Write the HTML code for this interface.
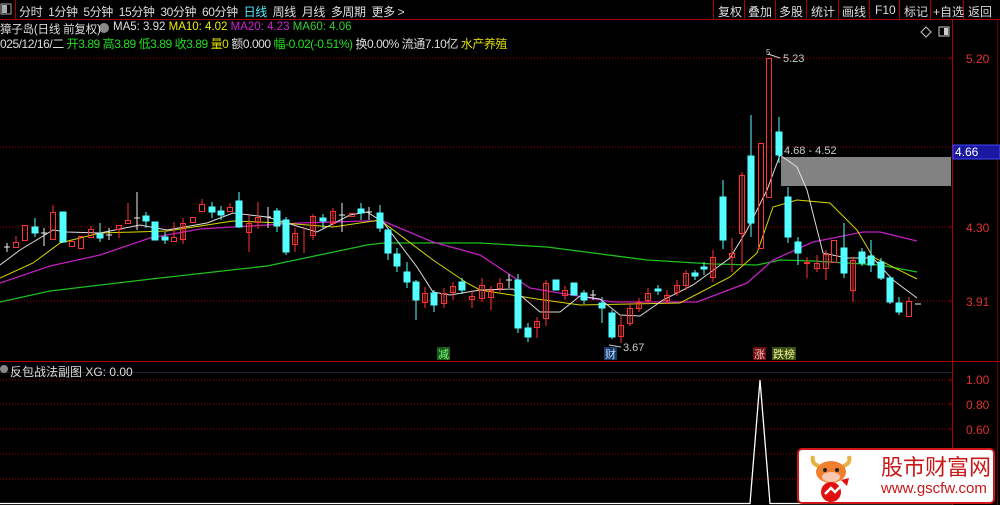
<!DOCTYPE html>
<html><head><meta charset="utf-8"><style>
body{margin:0;width:1000px;height:505px;background:#000;overflow:hidden;font-family:"Liberation Sans","Noto Sans CJK SC",sans-serif;position:relative}
.t{position:absolute;white-space:nowrap;font-size:12px}
</style></head><body>
<svg width="1000" height="505" style="position:absolute;left:0;top:0" font-family="Liberation Sans, Noto Sans CJK SC, sans-serif">
<line x1="0" y1="19.5" x2="1000" y2="19.5" stroke="#a00" />
<line x1="952.5" y1="20" x2="952.5" y2="505" stroke="#a00"/>
<line x1="0" y1="361.5" x2="1000" y2="361.5" stroke="#a00"/>
<line x1="997.5" y1="20" x2="997.5" y2="505" stroke="#600"/>
<g stroke="#a00" stroke-dasharray="1,2">
<line x1="0" y1="58" x2="952" y2="58"/><line x1="0" y1="147" x2="952" y2="147"/><line x1="0" y1="227" x2="952" y2="227"/><line x1="0" y1="301" x2="952" y2="301"/>
<line x1="0" y1="380" x2="952" y2="380"/><line x1="0" y1="404" x2="952" y2="404"/><line x1="0" y1="429" x2="952" y2="429"/><line x1="0" y1="454" x2="952" y2="454"/><line x1="0" y1="479" x2="952" y2="479"/>
</g>
<line x1="0" y1="372.5" x2="952" y2="372.5" stroke="#223" />
<g stroke="#a00"><line x1="948" y1="58" x2="952" y2="58"/><line x1="948" y1="227" x2="952" y2="227"/><line x1="948" y1="301" x2="952" y2="301"/><line x1="948" y1="380" x2="952" y2="380"/><line x1="948" y1="404" x2="952" y2="404"/><line x1="948" y1="429" x2="952" y2="429"/></g>
<rect x="781" y="157" width="170" height="29" fill="#828282"/>
<polyline fill="none" stroke="#1fbf1f" stroke-width="1.3" points="0,302 50,291 160,278 267,266 367,245 383,243 480,243 547,247 647,260 713,264 757,265 780,260 813,261 880,265 917,272"/>
<polyline fill="none" stroke="#c020c0" stroke-width="1.3" points="0,283 50,266 100,255 150,238 200,229 233,227 300,223 367,221 383,221 433,242 480,255 530,288 613,302 697,302 747,283 773,260 813,242 863,232 880,232 917,241"/>
<polyline fill="none" stroke="#d8d800" stroke-width="1" points="0,278 33,263 60,243 100,233 167,231 233,221 283,223 333,227 380,220 433,260 467,283 480,290 537,299 580,305 680,303 730,277 757,253 773,207 797,200 830,203 857,230 873,257 917,279"/>
<polyline fill="none" stroke="#ddd" stroke-width="1" points="0,265 20,250 53,230 67,232 100,233 140,225 167,230 207,223 233,213 267,217 300,227 317,232 350,215 367,212 383,222 417,267 433,292 450,295 480,290 513,289 540,312 560,312 580,296 600,299 620,315 640,316 663,300 693,285 730,258 747,230 767,190 780,155 797,167 807,190 823,253 847,258 873,258 893,280 917,298"/>
<g stroke-width="1">
<g fill="#54ffff" stroke="#54ffff">
<rect x="32" y="227" width="6" height="6"/><line x1="35" y1="218" x2="35" y2="237"/>
<rect x="60" y="212" width="6" height="30"/>
<rect x="97" y="234" width="6" height="4"/><line x1="100" y1="223" x2="100" y2="242"/>
<rect x="143" y="216" width="6" height="5"/><line x1="146" y1="212" x2="146" y2="228"/>
<rect x="152" y="222" width="6" height="18"/>
<rect x="162" y="237" width="6" height="3"/><line x1="165" y1="232" x2="165" y2="244"/>
<rect x="209" y="207" width="6" height="5"/><line x1="212" y1="202" x2="212" y2="218"/>
<rect x="218" y="211" width="6" height="4"/><line x1="221" y1="206" x2="221" y2="220"/>
<rect x="236" y="201" width="6" height="26"/><line x1="239" y1="192" x2="239" y2="228"/>
<rect x="274" y="211" width="6" height="15"/><line x1="277" y1="208" x2="277" y2="232"/>
<rect x="283" y="220" width="6" height="32"/><line x1="286" y1="217" x2="286" y2="255"/>
<rect x="320" y="218" width="6" height="3"/><line x1="323" y1="214" x2="323" y2="228"/>
<rect x="358" y="209" width="6" height="4"/><line x1="361" y1="203" x2="361" y2="220"/>
<rect x="377" y="213" width="6" height="15"/><line x1="380" y1="205" x2="380" y2="232"/>
<rect x="385" y="230" width="6" height="23"/><line x1="388" y1="228" x2="388" y2="260"/>
<rect x="394" y="254" width="6" height="12"/><line x1="397" y1="248" x2="397" y2="272"/>
<rect x="404" y="272" width="6" height="10"/><line x1="407" y1="262" x2="407" y2="288"/>
<rect x="413" y="282" width="6" height="18"/><line x1="416" y1="280" x2="416" y2="320"/>
<rect x="431" y="293" width="6" height="12"/><line x1="434" y1="290" x2="434" y2="312"/>
<rect x="459" y="282" width="6" height="8"/><line x1="462" y1="278" x2="462" y2="294"/>
<rect x="515" y="280" width="6" height="48"/><line x1="518" y1="274" x2="518" y2="333"/>
<rect x="525" y="328" width="6" height="9"/><line x1="528" y1="323" x2="528" y2="342"/>
<rect x="553" y="280" width="6" height="10"/>
<rect x="571" y="283" width="6" height="12"/>
<rect x="581" y="293" width="6" height="7"/><line x1="584" y1="290" x2="584" y2="304"/>
<rect x="599" y="303" width="6" height="5"/><line x1="602" y1="297" x2="602" y2="323"/>
<rect x="609" y="313" width="6" height="24"/><line x1="612" y1="310" x2="612" y2="339"/>
<rect x="655" y="289" width="6" height="2"/><line x1="658" y1="285" x2="658" y2="295"/>
<rect x="692" y="273" width="6" height="3"/><line x1="695" y1="270" x2="695" y2="280"/>
<rect x="701" y="267" width="6" height="2"/><line x1="704" y1="262" x2="704" y2="275"/>
<rect x="720" y="197" width="6" height="43"/><line x1="723" y1="180" x2="723" y2="249"/>
<rect x="748" y="156" width="6" height="67"/><line x1="751" y1="115" x2="751" y2="237"/>
<rect x="776" y="132" width="6" height="23"/><line x1="779" y1="117" x2="779" y2="163"/>
<rect x="785" y="197" width="6" height="40"/><line x1="788" y1="187" x2="788" y2="243"/>
<rect x="795" y="242" width="6" height="11"/><line x1="798" y1="237" x2="798" y2="265"/>
<rect x="841" y="248" width="6" height="25"/><line x1="844" y1="223" x2="844" y2="278"/>
<rect x="859" y="252" width="6" height="11"/><line x1="862" y1="248" x2="862" y2="266"/>
<rect x="868" y="256" width="6" height="9"/><line x1="871" y1="240" x2="871" y2="272"/>
<rect x="878" y="262" width="6" height="16"/><line x1="881" y1="258" x2="881" y2="280"/>
<rect x="887" y="278" width="6" height="24"/><line x1="890" y1="276" x2="890" y2="304"/>
<rect x="896" y="303" width="6" height="9"/><line x1="899" y1="297" x2="899" y2="315"/>
</g>
<g fill="none" stroke="#ff3232">
<rect x="13.5" y="242.5" width="5" height="5"/><line x1="16" y1="236" x2="16" y2="242"/>
<rect x="22.5" y="225.5" width="5" height="15"/>
<rect x="50.5" y="212.5" width="5" height="27"/><line x1="53" y1="205" x2="53" y2="212"/>
<rect x="69.5" y="241.5" width="5" height="5"/>
<rect x="78.5" y="236.5" width="5" height="12"/>
<rect x="88.5" y="229.5" width="5" height="8"/><line x1="91" y1="226" x2="91" y2="229"/>
<rect x="116.5" y="225.5" width="5" height="4"/><line x1="119" y1="229" x2="119" y2="238"/>
<rect x="125.5" y="220.5" width="5" height="3"/><line x1="128" y1="203" x2="128" y2="220"/>
<rect x="171.5" y="237.5" width="5" height="4"/><line x1="174" y1="222" x2="174" y2="237"/>
<rect x="180.5" y="223.5" width="5" height="16"/><line x1="183" y1="218" x2="183" y2="244"/>
<rect x="190.5" y="217.5" width="5" height="5"/>
<rect x="199.5" y="204.5" width="5" height="7"/><line x1="202" y1="199" x2="202" y2="204"/>
<rect x="227.5" y="207.5" width="5" height="4"/><line x1="230" y1="203" x2="230" y2="207"/>
<rect x="246.5" y="223.5" width="5" height="9"/><line x1="249" y1="215" x2="249" y2="252"/>
<rect x="255.5" y="217.5" width="5" height="5"/><line x1="258" y1="202" x2="258" y2="229"/>
<rect x="292.5" y="233.5" width="5" height="11"/><line x1="295" y1="228" x2="295" y2="252"/>
<line x1="304" y1="228" x2="304" y2="253"/>
<rect x="310.5" y="216.5" width="5" height="19"/><line x1="313" y1="214" x2="313" y2="240"/>
<rect x="330.5" y="211.5" width="5" height="12"/><line x1="333" y1="208" x2="333" y2="226"/>
<rect x="349.5" y="213.5" width="5" height="3"/>
<rect x="422.5" y="293.5" width="5" height="9"/><line x1="425" y1="287" x2="425" y2="308"/>
<rect x="441.5" y="293.5" width="5" height="10"/><line x1="444" y1="288" x2="444" y2="308"/>
<rect x="450.5" y="286.5" width="5" height="6"/><line x1="453" y1="282" x2="453" y2="300"/>
<rect x="469.5" y="296.5" width="5" height="3"/><line x1="472" y1="290" x2="472" y2="308"/>
<rect x="479.5" y="285.5" width="5" height="13"/><line x1="482" y1="278" x2="482" y2="302"/>
<rect x="488.5" y="290.5" width="5" height="7"/><line x1="491" y1="286" x2="491" y2="310"/>
<rect x="497.5" y="283.5" width="5" height="5"/><line x1="500" y1="278" x2="500" y2="292"/>
<rect x="534.5" y="321.5" width="5" height="6"/><line x1="537" y1="317" x2="537" y2="338"/>
<rect x="543.5" y="283.5" width="5" height="35"/><line x1="546" y1="280" x2="546" y2="326"/>
<rect x="562.5" y="290.5" width="5" height="5"/><line x1="565" y1="286" x2="565" y2="300"/>
<rect x="618.5" y="325.5" width="5" height="11"/><line x1="621" y1="316" x2="621" y2="343"/>
<rect x="627.5" y="308.5" width="5" height="15"/><line x1="630" y1="303" x2="630" y2="326"/>
<rect x="636.5" y="302.5" width="5" height="6"/><line x1="639" y1="298" x2="639" y2="312"/>
<rect x="645.5" y="293.5" width="5" height="7"/><line x1="648" y1="288" x2="648" y2="304"/>
<rect x="664.5" y="295.5" width="5" height="5"/><line x1="667" y1="290" x2="667" y2="304"/>
<rect x="674.5" y="285.5" width="5" height="7"/><line x1="677" y1="280" x2="677" y2="296"/>
<rect x="683.5" y="273.5" width="5" height="12"/><line x1="686" y1="270" x2="686" y2="290"/>
<rect x="710.5" y="257.5" width="5" height="20"/><line x1="713" y1="250" x2="713" y2="282"/>
<rect x="729.5" y="253.5" width="5" height="4"/><line x1="732" y1="238" x2="732" y2="272"/>
<rect x="739.5" y="175.5" width="5" height="58"/><line x1="742" y1="172" x2="742" y2="266"/>
<rect x="758.5" y="143.5" width="5" height="105"/>
<rect x="766.5" y="58.5" width="5" height="139"/>
<rect x="804.5" y="262.5" width="5" height="1"/><line x1="807" y1="257" x2="807" y2="278"/>
<rect x="814.5" y="263.5" width="5" height="5"/><line x1="817" y1="255" x2="817" y2="272"/>
<rect x="823.5" y="254.5" width="5" height="14"/><line x1="826" y1="250" x2="826" y2="280"/>
<rect x="831.5" y="240.5" width="5" height="22"/>
<rect x="850.5" y="260.5" width="5" height="30"/><line x1="853" y1="257" x2="853" y2="302"/>
<rect x="906.5" y="301.5" width="5" height="15"/><line x1="909" y1="297" x2="909" y2="301"/>
</g>
<g stroke="#eee">
<line x1="4" y1="247" x2="10" y2="247"/><line x1="7" y1="243" x2="7" y2="252"/>
<line x1="41" y1="233" x2="47" y2="233"/><line x1="44" y1="228" x2="44" y2="246"/>
<line x1="106" y1="235" x2="112" y2="235"/><line x1="109" y1="228" x2="109" y2="240"/>
<line x1="134" y1="218" x2="140" y2="218"/><line x1="137" y1="192" x2="137" y2="230"/>
<line x1="265" y1="217" x2="271" y2="217"/><line x1="268" y1="207" x2="268" y2="228"/>
<line x1="339" y1="215" x2="345" y2="215"/><line x1="342" y1="203" x2="342" y2="232"/>
<line x1="366" y1="212" x2="372" y2="212"/><line x1="369" y1="207" x2="369" y2="220"/>
<line x1="506" y1="280" x2="512" y2="280"/><line x1="509" y1="274" x2="509" y2="288"/>
<line x1="590" y1="295" x2="596" y2="295"/><line x1="593" y1="290" x2="593" y2="300"/>
<line x1="915" y1="304" x2="921" y2="304"/>
</g>
</g>
<polyline fill="none" stroke="#fff" stroke-width="1.3" points="0,503.5 750,503.5 760,380 770,503.5 952,503.5"/>
<text x="783" y="62" fill="#ccc" font-size="11">5.23</text>
<path d="M768 54 L780 58" stroke="#ccc" fill="none"/><text x="766" y="55" fill="#ccc" font-size="8">5</text>
<text x="623" y="351" fill="#ccc" font-size="11">3.67</text><path d="M609 345 L621 347" stroke="#ccc"/>
<text x="784" y="154" fill="#ccc" font-size="11">4.68 - 4.52</text>
<rect x="437" y="347" width="13" height="13" fill="#1a5a1a"/><text x="438" y="358" fill="#7f7" font-size="11">减</text>
<rect x="604" y="347" width="13" height="13" fill="#1a3a6a"/><text x="605" y="358" fill="#bdf" font-size="11">财</text>
<rect x="753" y="347" width="13" height="13" fill="#6a1010"/><text x="754" y="358" fill="#fbb" font-size="11">涨</text>
<rect x="772" y="347" width="24" height="13" fill="#3a5010"/><text x="773" y="358" fill="#ee9" font-size="11">跌榜</text>
<g fill="#e03030" font-size="12"><text x="966" y="63">5.20</text><text x="966" y="232">4.30</text><text x="966" y="306">3.91</text>
<text x="966" y="384">1.00</text><text x="966" y="409">0.80</text><text x="966" y="434">0.60</text></g>
<rect x="953" y="145" width="47" height="14" fill="#1a1aa0" stroke="#44f"/><text x="955" y="156" fill="#fff" font-size="12">4.66</text>
<rect x="1" y="4" width="10" height="10" fill="none" stroke="#aaa"/><rect x="2" y="5" width="5" height="8" fill="#aaa"/>
<g stroke="#a00"><line x1="15.5" y1="0" x2="15.5" y2="19"/>
<line x1="713.5" y1="0" x2="713.5" y2="19"/><line x1="744.5" y1="0" x2="744.5" y2="19"/><line x1="775.5" y1="0" x2="775.5" y2="19"/><line x1="806.5" y1="0" x2="806.5" y2="19"/><line x1="838.5" y1="0" x2="838.5" y2="19"/><line x1="869.5" y1="0" x2="869.5" y2="19"/><line x1="899.5" y1="0" x2="899.5" y2="19"/><line x1="930.5" y1="0" x2="930.5" y2="19"/><line x1="963.5" y1="0" x2="963.5" y2="19"/></g>
<path d="M926 27 L931 32 L926 37 L921 32 Z" fill="none" stroke="#ccc"/>
<rect x="939" y="27" width="10" height="9" fill="none" stroke="#ccc"/><rect x="944" y="28" width="4" height="7" fill="#ccc"/>
<circle cx="104" cy="28" r="5" fill="#888"/><circle cx="4" cy="369" r="4" fill="#888"/>
</svg>
<div class="t" style="left:19px;top:3px;color:#ddd;letter-spacing:-0.4px">分时&nbsp; 1分钟&nbsp; 5分钟&nbsp; 15分钟&nbsp; 30分钟&nbsp; 60分钟&nbsp; <span style="color:#5ef">日线</span>&nbsp; 周线&nbsp; 月线&nbsp; 多周期&nbsp; 更多 &gt;</div>
<div class="t" style="left:718px;top:3px;color:#ddd">复权</div>
<div class="t" style="left:748px;top:3px;color:#ddd">叠加</div>
<div class="t" style="left:779px;top:3px;color:#ddd">多股</div>
<div class="t" style="left:811px;top:3px;color:#ddd">统计</div>
<div class="t" style="left:842px;top:3px;color:#ddd">画线</div>
<div class="t" style="left:875px;top:3px;color:#ddd">F10</div>
<div class="t" style="left:904px;top:3px;color:#ddd">标记</div>
<div class="t" style="left:933px;top:3px;color:#ddd">+自选</div>
<div class="t" style="left:968px;top:3px;color:#ddd">返回</div>
<div class="t" style="left:0;top:21px;color:#ddd;font-size:11.5px;letter-spacing:-0.2px">獐子岛(日线 前复权)</div>
<div class="t" style="left:113px;top:21px;color:#ddd;font-size:11.5px">MA5: 3.92 <span style="color:#ee0">MA10: 4.02</span> <span style="color:#d020d0">MA20: 4.23</span> <span style="color:#3c3">MA60: 4.06</span></div>
<div class="t" style="left:0;top:35px;color:#ddd;font-size:12px;letter-spacing:-0.45px">025/12/16/二 <span style="color:#2d2">开3.89 高3.89 低3.89 收3.89</span> <span style="color:#dd0">量0</span> 额0.000 <span style="color:#2d2">幅-0.02(-0.51%)</span> 换0.00% 流通7.10亿 <span style="color:#dd0">水产养殖</span></div>
<div class="t" style="left:10px;top:363px;color:#ddd">反包战法副图 XG: 0.00</div>
<div style="position:absolute;left:797px;top:448px;width:194px;height:52px;background:#fff;border:2px solid #d01818;border-radius:5px;overflow:hidden">
<svg width="50" height="53" style="position:absolute;left:8px;top:0">
<path d="M6 6 Q4 14 12 16 M42 6 Q44 14 36 16" stroke="#e8b040" stroke-width="4" fill="none"/>
<ellipse cx="24" cy="22" rx="15" ry="11" fill="#f08030"/>
<ellipse cx="24" cy="27" rx="9" ry="5" fill="#f8c8b0"/>
<circle cx="18" cy="20" r="2" fill="#222"/><circle cx="30" cy="20" r="2" fill="#222"/>
<circle cx="24" cy="42" r="10" fill="#e01010"/>
<path d="M18 44 L24 38 L28 42 L38 32" stroke="#fff" stroke-width="2.5" fill="none"/>
<path d="M34 30 L42 28 L40 36 Z" fill="#e01010"/>
</svg>
<div class="t" style="left:82px;top:3px;font-size:22px;color:#c81818;font-family:'Noto Sans CJK SC',sans-serif;line-height:26px">股市财富网</div>
<div class="t" style="left:82px;top:31px;font-size:15px;color:#c81818;line-height:16px">www.gscfw.com</div>
</div>
</body></html>
